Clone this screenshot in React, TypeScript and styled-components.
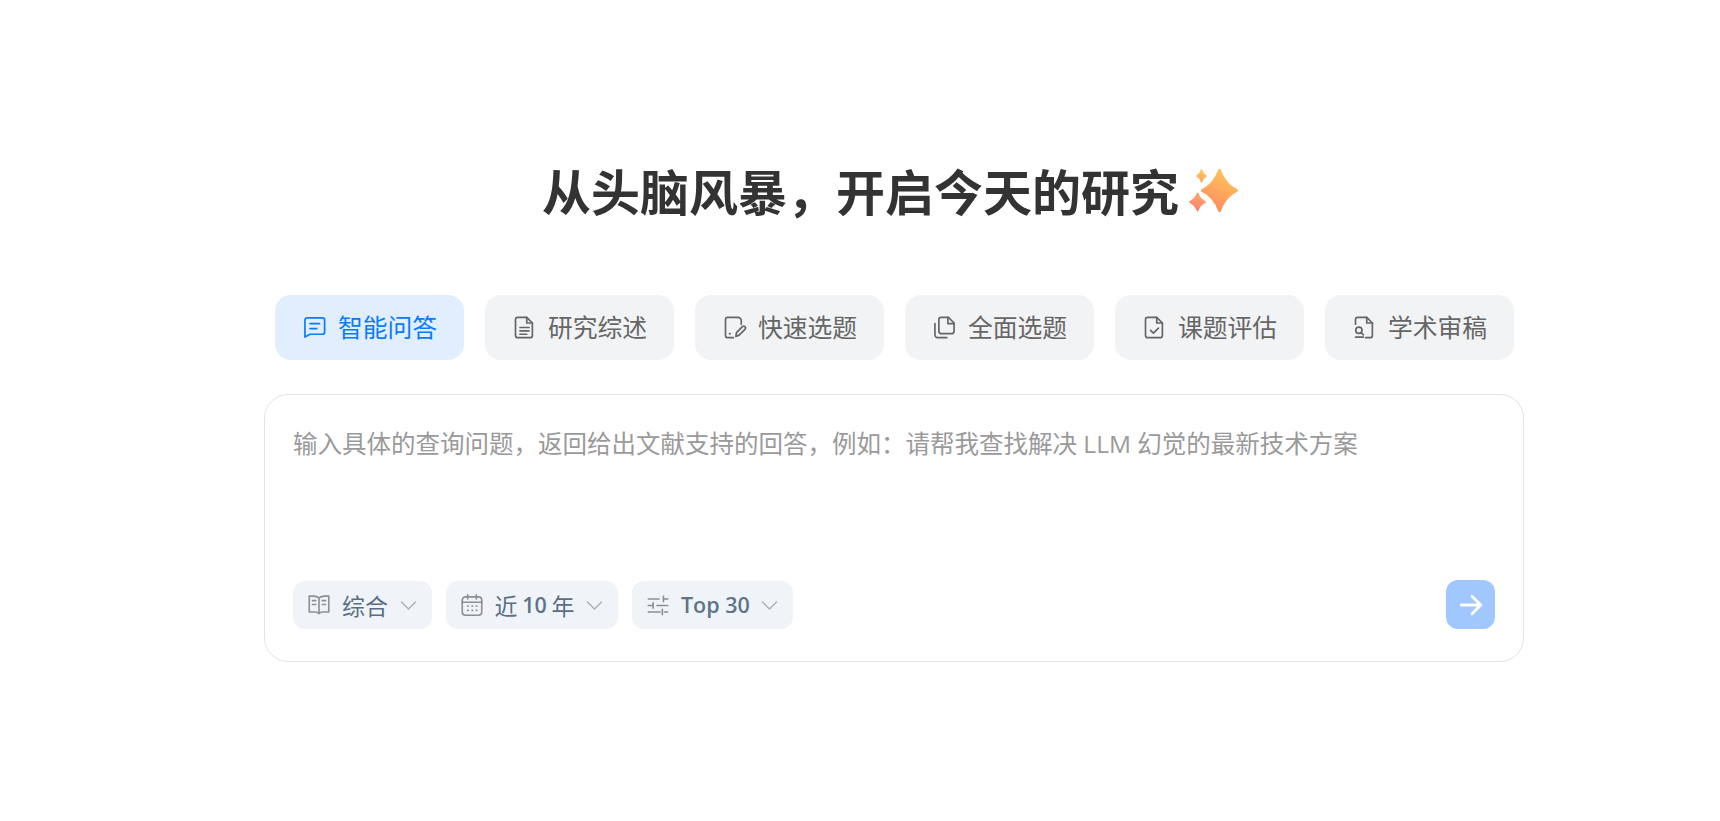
import React from "react";
import styled, { createGlobalStyle } from "styled-components";

const Global = createGlobalStyle`
  html, body { margin: 0; padding: 0; background: #fff; }
  body { font-family: "Open Sans", "Noto Sans CJK SC", sans-serif; }
`;
const Page = styled.main`
  box-sizing: border-box;
  min-height: 821px;
  padding: 157px 0 0 68px;
  display: flex;
  flex-direction: column;
  align-items: center;
`;
const Title = styled.h1`
  margin: 0 0 73px;
  height: 65px;
  display: flex;
  align-items: center;
  gap: 10px;
  font: 700 49px/65px "Noto Sans CJK SC", sans-serif;
  color: #333;
`;
const Tabs = styled.nav`
  width: 1239px;
  display: grid;
  grid-template-columns: repeat(6, 189px);
  gap: 21px;
`;
const Tab = styled.button<{ $active?: boolean }>`
  height: 65px;
  border: 0;
  padding: 0 0 4px;
  border-radius: 16px;
  display: flex;
  align-items: center;
  justify-content: center;
  gap: 10px;
  background: ${(p) => (p.$active ? "#e0eefd" : "#f1f3f5")};
  color: ${(p) => (p.$active ? "#0a7aff" : "#666")};
  font: 400 24.8px/32px "Noto Sans CJK SC", sans-serif;
  svg { width: 27px; height: 27px; flex: none; stroke-width: 1.5; margin-top: 4px; }
`;
const Card = styled.section`
  box-sizing: border-box;
  width: 1260px;
  height: 268px;
  margin-top: 34px;
  padding: 33px 28px 32px;
  border: 1px solid #e3e3e3;
  border-radius: 24px;
  display: flex;
  flex-direction: column;
  justify-content: space-between;
  background: #fff;
`;
const Prompt = styled.div`
  font: 400 24.5px/32px "Open Sans", "Noto Sans CJK SC", sans-serif;
  color: #9a9a9a;
`;
const Footer = styled.div`
  display: flex;
  align-items: flex-end;
  justify-content: space-between;
`;
const Chips = styled.div`
  display: flex;
  gap: 14px;
`;
const Chip = styled.button`
  height: 48px;
  border: 0;
  padding: 0 13px;
  border-radius: 12px;
  display: flex;
  align-items: center;
  background: #f0f4f9;
  color: #5a6f85;
  font: 400 23px/30px "Noto Sans CJK SC", sans-serif;
  word-spacing: -0.5px;
  svg.lead { width: 26px; height: 26px; color: #8c9094; flex: none; margin-right: 10px; }
  svg.chev { width: 21px; height: 21px; color: #a9adb1; flex: none; margin-left: 9.500px; }
`;
const Latin = styled.span`
  font: 600 21.500px/30px "Open Sans", sans-serif;
  color: #5f7489;
  word-spacing: 0;
`;
const Send = styled.button`
  width: 49px;
  height: 49px;
  border: 0;
  padding: 0;
  border-radius: 12px;
  background: #a0c8fe;
  color: #fff;
  display: flex;
  align-items: center;
  justify-content: center;
  svg { width: 26px; height: 26px; stroke-width: 2.6; }
`;
const Sparkle = styled.svg`
  width: 49px;
  height: 43px;
  flex: none;
  margin: 2px 8px 0 0;
`;

const Ico = ({ children, className }: { children: React.ReactNode; className?: string }) => (
  <svg className={className} viewBox="0 0 24 24" fill="none" stroke="currentColor" strokeWidth="1.5" strokeLinecap="round" strokeLinejoin="round">
    {children}
  </svg>
);

const Chevron = () => (
  <Ico className="chev">
    <path d="M4 8l8 8 8-8" />
  </Ico>
);

const star = (cx: number, cy: number, rx: number, ry: number, k = 0.3) => {
  const a = rx * k;
  const b = ry * k;
  return `M${cx} ${cy - ry}Q${cx + a} ${cy - b} ${cx + rx} ${cy}Q${cx + a} ${cy + b} ${cx} ${cy + ry}Q${cx - a} ${cy + b} ${cx - rx} ${cy}Q${cx - a} ${cy - b} ${cx} ${cy - ry}Z`;
};

const tabs: [string, React.ReactNode][] = [
  ["智能问答", <><path d="M3.500 5.500a2 2 0 0 1 2-2h13.500a2 2 0 0 1 2 2v10.500a2 2 0 0 1-2 2H8l-4.500 2.500z" /><path d="M8 8.500h8.500M8 13h6" /></>],
  ["研究综述", <><path d="M6 3h8l5 5v11a2 2 0 0 1-2 2H6a2 2 0 0 1-2-2V5a2 2 0 0 1 2-2z" /><path d="M14 3v5h5M8 12h8M8 15h8M8 18h6" /></>],
  ["快速选题", <><path d="M11 21H6a2 2 0 0 1-2-2V5a2 2 0 0 1 2-2h9a3 3 0 0 1 3 3v3" /><path d="M7.500 17.500h.6" /><path d="M13.200 20l.6-3.500 5.200-5.200a1.600 1.600 0 0 1 2.300 2.300l-5.200 5.200z" /></>],
  ["全面选题", <><path d="M9 3h6.500l5 5v7a2.500 2.500 0 0 1-2.500 2.500H9.500A2.500 2.500 0 0 1 7 15V5a2 2 0 0 1 2-2z" /><path d="M15 3v5.500h5.500" /><path d="M3.500 8.500v10A2.500 2.500 0 0 0 6 21h8" /></>],
  ["课题评估", <><path d="M6 3h8l5 5v11a2 2 0 0 1-2 2H6a2 2 0 0 1-2-2V5a2 2 0 0 1 2-2z" /><path d="M14 3v5h5M8.500 14.500l2.500 2.500 4.500-4.500" /></>],
  ["学术审稿", <><path d="M4 9V5a2 2 0 0 1 2-2h8l5 5v11a2 2 0 0 1-2 2h-4" /><path d="M14 3v5h5" /><circle cx="7" cy="14.500" r="2.800" /><path d="M9 16.500l2 2" /><path d="M4 20.500h7" /></>],
];

export default function App() {
  return (
    <Page>
      <Global />
      <Title>
        从头脑风暴，开启今天的研究
        <Sparkle viewBox="0 0 49 43" aria-hidden="true">
          <defs>
            <linearGradient id="big" x1="0.75" y1="0" x2="0.3" y2="1">
              <stop offset="0" stopColor="#ffc75c" />
              <stop offset="1" stopColor="#ff8a5e" />
            </linearGradient>
            <linearGradient id="small" x1="0.7" y1="0" x2="0.3" y2="1">
              <stop offset="0" stopColor="#ffa868" />
              <stop offset="1" stopColor="#fa7f70" />
            </linearGradient>
            <linearGradient id="tiny" x1="0.5" y1="0" x2="0.5" y2="1">
              <stop offset="0" stopColor="#ffc860" />
              <stop offset="1" stopColor="#fda55a" />
            </linearGradient>
          </defs>
          <path fill="url(#big)" stroke="url(#big)" strokeWidth="3" strokeLinejoin="round" d={star(30.5, 21.5, 17, 20)} />
          <path fill="url(#small)" stroke="url(#small)" strokeWidth="1.500" strokeLinejoin="round" d={star(8.5, 33, 7.700, 8.700)} />
          <path fill="url(#tiny)" stroke="url(#tiny)" strokeWidth="1" strokeLinejoin="round" d={star(12.5, 7, 5, 6.500)} />
        </Sparkle>
      </Title>
      <Tabs>
        {tabs.map(([label, icon], i) => (
          <Tab key={label} $active={i === 0}>
            <Ico>{icon}</Ico>
            {label}
          </Tab>
        ))}
      </Tabs>
      <Card>
        <Prompt>输入具体的查询问题，返回给出文献支持的回答，例如：请帮我查找解决 LLM 幻觉的最新技术方案</Prompt>
        <Footer>
          <Chips>
            <Chip>
              <Ico className="lead">
                <path d="M12 19.500V5.500C10.500 4.300 9 3.800 7 3.800H3v14.700h5.500c1.500 0 2.500.4 3.500 1.500 1-1.100 2-1.500 3.500-1.500H21V3.800h-4c-2 0-3.500.5-5 1.700" />
                <path d="M6 8h3M6 11.500h3M15 8h3M15 11.500h3" />
              </Ico>
              综合
              <Chevron />
            </Chip>
            <Chip>
              <Ico className="lead">
                <rect x="3" y="4.500" width="18" height="17" rx="3" />
                <path d="M8 2.500v4M16 2.500v4M3 9.500h18" />
                <path d="M8 13h.5M12 13h.5M16 13h.5M8 17h.5M12 17h.5M16 17h.5" />
              </Ico>
              近&nbsp;<Latin>10</Latin>&nbsp;年
              <Chevron />
            </Chip>
            <Chip>
              <Ico className="lead">
                <path d="M3 6.500h10M17 6.500h4M17 4v5M3 12.500h4M11 12.500h10M7.500 10v5M3 18.500h11M18 18.500h3M16 16v5" />
              </Ico>
              <Latin>Top 30</Latin>
              <Chevron />
            </Chip>
          </Chips>
          <Send aria-label="发送">
            <Ico>
              <path d="M3 12h18M13 4l8 8-8 8" />
            </Ico>
          </Send>
        </Footer>
      </Card>
    </Page>
  );
}
